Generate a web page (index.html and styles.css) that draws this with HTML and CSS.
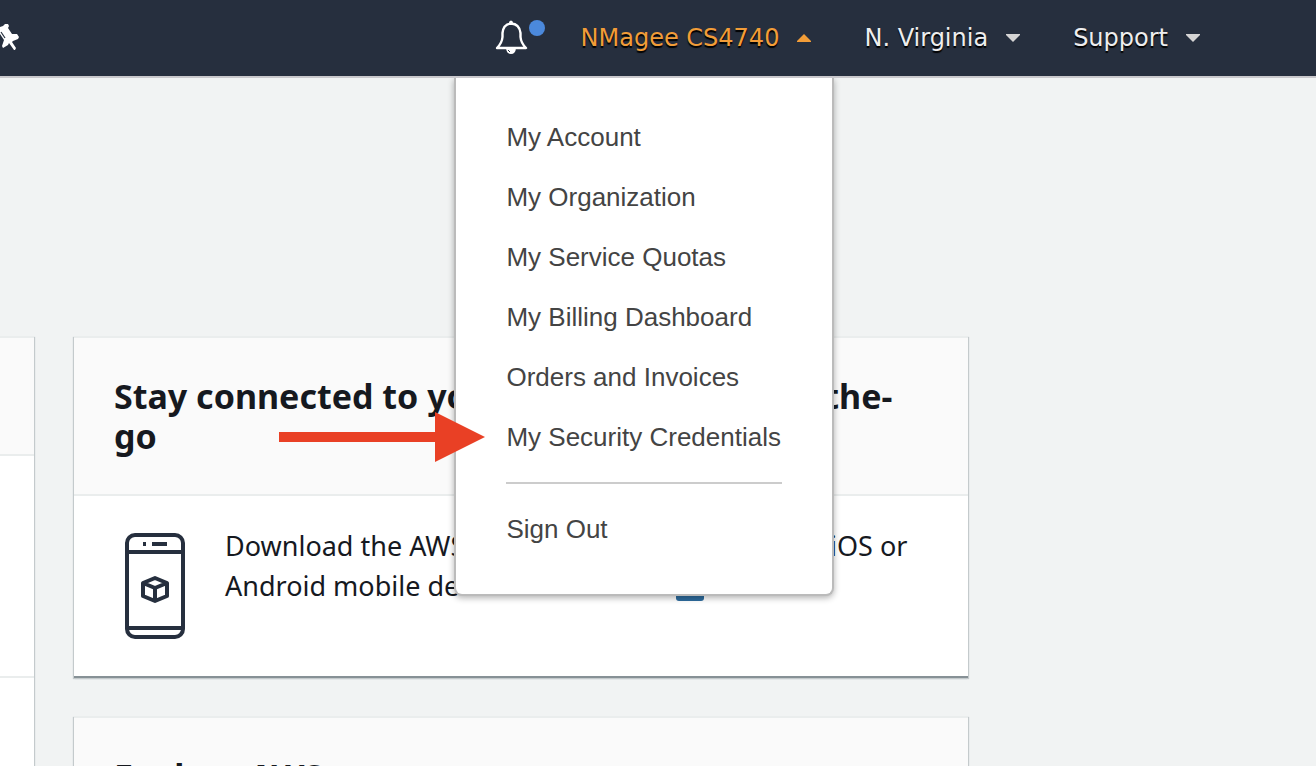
FILE: index.html
```html
<!DOCTYPE html>
<html lang="en">
<head>
<meta charset="utf-8">
<title>AWS Management Console</title>
<link rel="stylesheet" href="styles.css">
</head>
<body>
<header class="topbar">
  <button class="icon-button pin" aria-label="Pin shortcuts">
    <svg width="20" height="30" viewBox="0 0 20 30"><path fill="#fff" d="M0 4 3 3 5 1 8 1 9 3 8 5 12 11 17 11 19 14 18 16 13 18 12 19 16 25 15 27 14 27 9 20 8 22 3 25 2 23 4 17 0 11Z"/><path d="M1 9 5 15" stroke="#262f3e" stroke-width="1.2"/></svg>
  </button>
  <nav class="nav" aria-label="Account">
    <button class="icon-button bell" aria-label="Notifications">
      <svg width="52" height="38" viewBox="0 0 52 38"><g fill="none" stroke="#fff" stroke-width="2.4" stroke-linejoin="round" stroke-linecap="round"><path d="M2 29Q7 24 7.500 18V14Q8.500 5 16 4.500Q24.500 5 25.500 14V18Q26 24 31 29Z"/></g><path d="M14 4a2 2.500 0 0 1 4 0ZM11 29H21Q20.500 35 16 35T11 29Z" fill="#fff"/><path d="M13 31 15 33" stroke="#262f3e"/><circle cx="42" cy="9" r="8" fill="#4b89dc"/></svg>
    </button>
    <div class="account">
      <button class="nav-item active" aria-expanded="true">NMagee CS4740
        <svg class="caret" width="14" height="8" viewBox="0 0 14 8"><path d="M0 8V7L7 0 14 7V8Z" fill="#f29d38"/></svg>
      </button>
      <div class="menu">
        <a href="#account">My Account</a>
        <a href="#organization">My Organization</a>
        <a href="#quotas">My Service Quotas</a>
        <a href="#billing">My Billing Dashboard</a>
        <a href="#orders">Orders and Invoices</a>
        <a href="#credentials">My Security Credentials</a>
        <hr>
        <a href="#signout">Sign Out</a>
        <svg class="pointer" width="206" height="50" viewBox="0 0 206 50"><path d="M0 20H156V0L206 25 156 50V30H0Z" fill="#e94025"/></svg>
      </div>
    </div>
    <button class="nav-item">N. Virginia
      <svg class="caret" width="14" height="8" viewBox="0 0 14 8"><path d="M0 0H14V1L7 8 0 1Z" fill="#d5d5d5"/></svg>
    </button>
    <button class="nav-item">Support
      <svg class="caret" width="14" height="8" viewBox="0 0 14 8"><path d="M0 0H14V1L7 8 0 1Z" fill="#d5d5d5"/></svg>
    </button>
  </nav>
</header>
<main class="content">
  <section class="card side" aria-label="AWS services">
    <div class="side-head"></div>
    <div class="side-body"></div>
  </section>
  <div class="column">
    <section class="card">
      <h2 class="card-head">Stay connected to your AWS resources on-the-go</h2>
      <div class="card-body">
        <svg class="phone" width="80" height="120" viewBox="0 0 80 120"><g fill="none" stroke="#262f3e" stroke-width="4"><rect x="13" y="9" width="56" height="102" rx="8"/><path d="M13 26H69M13 102H69"/><path d="M29 18H32M38 18H53"/><path d="M41 52 53 57V70L41 75 29 70V57ZM29 57 41 62 53 57M41 62V75" stroke-linejoin="round"/></g></svg>
        <p class="text">Download the AWS Console Mobile App to your iOS or Android mobile device. <a href="#learn">Learn more <svg width="28" height="24" viewBox="0 0 28 24"><rect width="28" height="24" rx="3" fill="#2e6c9e"/><path d="M8 16 18 6M12 6H18V12" fill="none" stroke="#fff" stroke-width="3"/></svg></a></p>
      </div>
    </section>
    <section class="card">
      <h2 class="card-head">Explore AWS</h2>
    </section>
  </div>
</main>
</body>
</html>
```
FILE: styles.css
```css
* { box-sizing: border-box; }
body {
  display: flex;
  flex-direction: column;
  margin: 0;
  height: 100vh;
  overflow: hidden;
  background: #f1f3f3;
  color: #16191f;
  font-family: "Noto Sans", sans-serif;
}
button {
  border: 0;
  padding: 0;
  background: none;
}
.topbar {
  display: flex;
  flex: none;
  align-items: center;
  justify-content: space-between;
  height: 78px;
  padding-right: 93px;
  background: #262f3e;
  border-bottom: 2px solid #c9c8cc;
}
.icon-button svg { display: block; }
.nav {
  display: flex;
  align-items: center;
  height: 100%;
}
.bell { margin-right: 4px; }
.account {
  position: relative;
  height: 100%;
  display: flex;
}
.nav-item {
  display: flex;
  align-items: center;
  gap: 18px;
  padding: 0 23px 0 30px;
  color: #eee;
  font: 24px/32px "DejaVu Sans", sans-serif;
  text-shadow: 0 2px 1px #000;
  white-space: nowrap;
}
.active { color: #f29d38; }
.menu {
  position: absolute;
  top: 100%;
  right: 0;
  z-index: 2;
  width: 380px;
  margin-top: 2px;
  padding: 29px 50px 35px;
  background: #fff;
  border: 2px solid #bbb;
  border-top: 0;
  border-radius: 0 0 8px 8px;
  box-shadow: 0 2px 6px rgba(0, 0, 0, 0.3);
  clip-path: inset(0 -10px -10px -180px);
}
.menu a {
  display: block;
  color: #444;
  font: 26px/60px "Liberation Sans", sans-serif;
  text-decoration: none;
  white-space: nowrap;
}
.menu hr {
  margin: 15px 0;
  border: 0;
  border-top: 2px solid #ccc;
}
.pointer {
  position: absolute;
  top: 334px;
  right: 347px;
}
.content {
  display: flex;
  flex: 1;
  align-items: flex-start;
  gap: 40px;
  min-height: 0;
  padding: 258px 348px 0 0;
  overflow: hidden;
}
.column {
  display: grid;
  flex: 1;
  gap: 38px;
}
.card {
  background: #fff;
  border-top: 2px solid #eaeded;
  border-bottom: 2px solid #879196;
  box-shadow: 1px 1px 1px #c4cacc, -1px 1px 1px #c4cacc;
}
.card-head {
  margin: 0;
  padding: 38px 40px;
  background: #fafafa;
  border-bottom: 2px solid #eaeded;
  font-size: 34px;
  line-height: 40px;
}
.card-body {
  display: flex;
  gap: 31px;
  padding: 30px 40px;
}
.phone { flex: none; }
.text {
  margin: 0;
  font-size: 27px;
  line-height: 40px;
}
.text a { color: #2e6c9e; text-decoration: none; }
.text svg { vertical-align: middle; }
.side { width: 34px; }
.side-head {
  height: 118px;
  background: #fafafa;
  border-bottom: 2px solid #eaeded;
}
.side-body {
  height: 222px;
  border-bottom: 2px solid #eaeded;
}
.side::after {
  content: "";
  display: block;
  height: 200px;
}
```
